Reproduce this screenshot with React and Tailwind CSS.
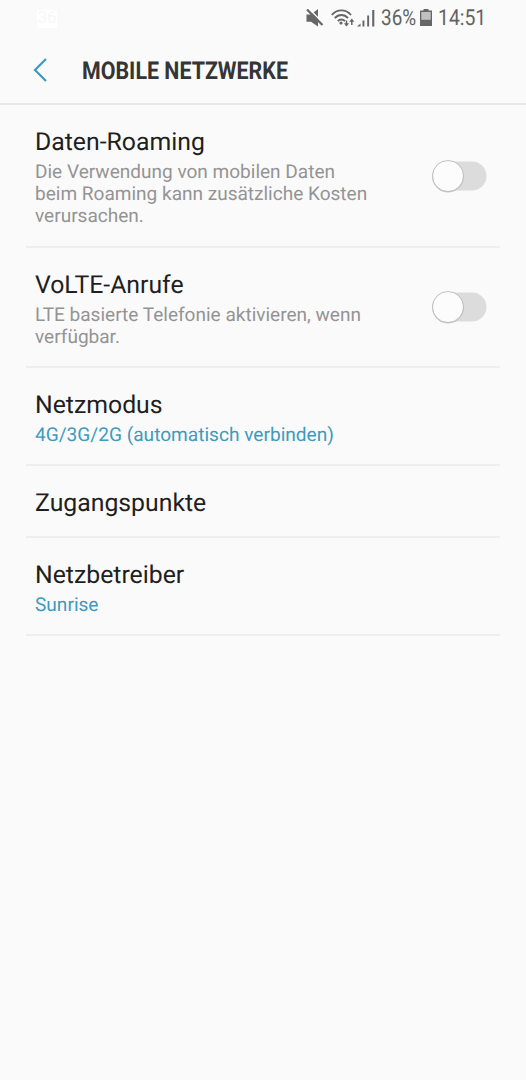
import React, { useState } from "react";

const SETTINGS = [
  {
    id: "roaming",
    title: "Daten-Roaming",
    lines: [
      "Die Verwendung von mobilen Daten",
      "beim Roaming kann zusätzliche Kosten",
      "verursachen.",
    ],
    toggle: true,
    height: "h-[143px]",
  },
  {
    id: "volte",
    title: "VoLTE-Anrufe",
    lines: ["LTE basierte Telefonie aktivieren, wenn", "verfügbar."],
    toggle: true,
    height: "h-[120px]",
  },
  {
    id: "mode",
    title: "Netzmodus",
    value: "4G/3G/2G (automatisch verbinden)",
    height: "h-[98px]",
  },
  { id: "apn", title: "Zugangspunkte", height: "h-[72px]" },
  {
    id: "operator",
    title: "Netzbetreiber",
    value: "Sunrise",
    height: "h-[98px]",
  },
];

function Toggle({ label, checked, onChange }) {
  return (
    <button
      role="switch"
      aria-label={label}
      aria-checked={checked}
      onClick={onChange}
      className="flex h-[34px] w-[55px] shrink-0 items-center"
    >
      <svg width="55" height="34" viewBox="0 0 55 34" className="shrink-0">
        <rect x="2" y="2.5" width="52.5" height="29" rx="14.5" fill={checked ? "#7fc0d6" : "#dcdcdc"} />
        <circle cx={checked ? 38.5 : 16} cy="17.6" r="15.8" fill="#bdbdbd" />
        <circle cx={checked ? 38.5 : 16} cy="17" r="15.5" fill="#fcfcfc" stroke="#b4b4b4" strokeWidth="0.8" />
      </svg>
    </button>
  );
}

function MuteIcon() {
  return (
    <svg width="18" height="20" viewBox="0 0 18 20" className="shrink-0">
      <path d="M0.5 5.5h4.5l7-5.5v17.5L5 12.7H0.5z" fill="#666666" />
      <path d="M2.5 -0.5l16 16" stroke="#fafafa" strokeWidth="1.6" />
      <path d="M1 0.5l15.5 15.5" stroke="#666666" strokeWidth="2.2" />
    </svg>
  );
}

function WifiIcon() {
  return (
    <svg width="25" height="20" viewBox="0 0 25 20" fill="none" stroke="#666666" className="shrink-0">
      <path d="M0.8 6C6-0.2 14.8-0.2 20 6" strokeWidth="1.9" />
      <path d="M3.8 9.2c3.6-4.2 9.6-4.2 13.2 0" strokeWidth="1.9" />
      <path d="M6.8 12.2c2-2.3 5.2-2.3 7.2 0" strokeWidth="1.9" />
      <circle cx="10" cy="14" r="1.6" fill="#666666" stroke="none" />
      <path d="M15.5 11.5v5M20.8 16v-5" strokeWidth="1.5" />
      <path d="M12.9 14.3h5.2L15.5 17.6zM18.2 12.8h5.2L20.8 9.6z" fill="#666666" stroke="none" />
    </svg>
  );
}

function SignalIcon() {
  return (
    <svg width="18" height="20" viewBox="0 0 18 20" fill="#666666" className="shrink-0">
      <path d="M0 17.5l3.5-3v3z" />
      <rect x="5.5" y="11.5" width="1.9" height="6" />
      <rect x="10.2" y="6.5" width="1.9" height="11" />
      <rect x="15.2" y="1" width="2.1" height="16.5" />
    </svg>
  );
}

function BatteryIcon() {
  return (
    <svg width="12" height="18" viewBox="0 0 12 18" className="shrink-0">
      <path d="M3.5 0h5v1.6H12v15.4H0V1.6h3.5z" fill="#666666" />
      <rect x="1.3" y="3" width="9.4" height="7.8" fill="#c0c0c0" />
    </svg>
  );
}

function StatusBar() {
  return (
    <div className="flex h-9 items-center justify-between pt-px pr-[41px] pl-[37px] text-[#636363]">
      <span className="flex h-[18px] w-[20px] items-center justify-center bg-white text-[17px] text-[#f7f7f7]">
        36
      </span>
      <div className="flex items-center">
        <MuteIcon />
        <div className="ml-[7px]">
          <WifiIcon />
        </div>
        <div className="ml-px">
          <SignalIcon />
        </div>
        <span className="mt-px ml-[6px] w-[36px] origin-left scale-x-[0.86] text-[22px] leading-none">36%</span>
        <div className="mb-px ml-[3px]">
          <BatteryIcon />
        </div>
        <span className="mt-px ml-[6px] w-[47px] origin-left scale-x-[0.88] text-[22px] leading-none">14:51</span>
      </div>
    </div>
  );
}

function App() {
  const [enabled, setEnabled] = useState({});

  return (
    <div className="min-h-screen bg-[#fafafa] font-['Roboto',sans-serif] [text-rendering:geometricPrecision]">
      <StatusBar />
      <header className="flex h-[69px] items-center border-b-2 border-[#e8e8e8] pl-[33px]">
        <svg width="16" height="24" viewBox="0 0 16 24" fill="none" stroke="#3d9abf" strokeWidth="2.2">
          <path d="M13 1L2 12l11 11" />
        </svg>
        <h1 className="mt-[4px] ml-[33px] origin-left scale-x-[0.873] text-[24.5px] font-bold whitespace-nowrap text-[#353535]">
          MOBILE NETZWERKE
        </h1>
      </header>
      <main className="px-[26px]">
        {SETTINGS.map((item) => (
          <section
            key={item.id}
            className={`flex justify-between border-b-2 border-[#eeeeee] pt-[22px] pr-[13px] pl-[9px] ${item.height}`}
          >
            <div>
              <h2 className="text-[24.8px] leading-[32px] whitespace-nowrap text-[#1f1f1f]">{item.title}</h2>
              <div className="pt-[1.5px]">
                {item.lines?.map((line) => (
                  <p key={line} className="text-[19.05px] leading-[22.4px] whitespace-nowrap text-[#949494]">
                    {line}
                  </p>
                ))}
                {item.value && (
                  <p className="text-[19.1px] leading-[22.4px] whitespace-nowrap text-[#3d9abf]">{item.value}</p>
                )}
              </div>
            </div>
            {item.toggle && (
              <div className="-mt-[22px] flex items-center">
                <Toggle
                  label={item.title}
                  checked={!!enabled[item.id]}
                  onChange={() => setEnabled({ ...enabled, [item.id]: !enabled[item.id] })}
                />
              </div>
            )}
          </section>
        ))}
      </main>
    </div>
  );
}

export default App;
